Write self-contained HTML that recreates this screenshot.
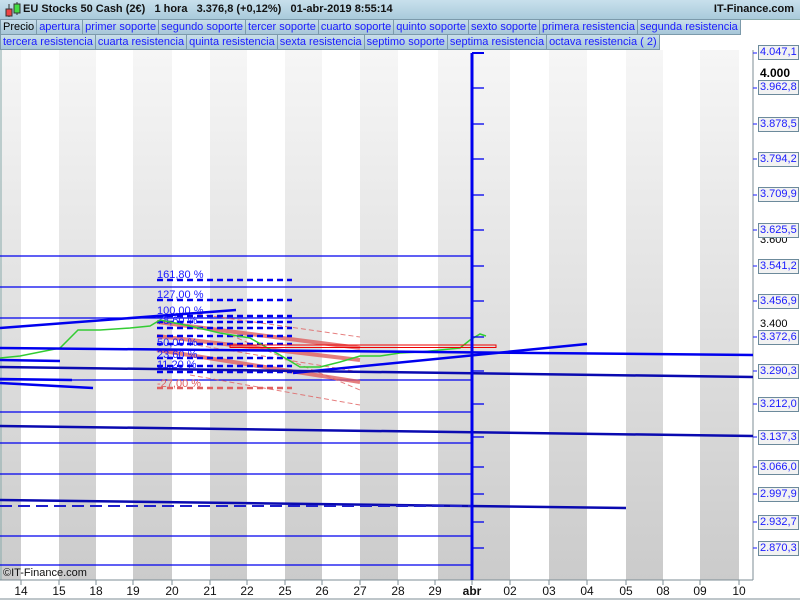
<!DOCTYPE html>
<html><head><meta charset="utf-8"><style>
body{margin:0;width:800px;height:600px;overflow:hidden;background:#fff;font-family:"Liberation Sans",sans-serif;position:relative}
#hdr{position:absolute;left:0;top:0;width:800px;height:19px;background:linear-gradient(#c8e0ec,#a9cadb);border-bottom:1px solid #8aa}
#hdr .t{position:absolute;left:23px;top:3px;font-size:11px;font-weight:bold;color:#111;white-space:pre}
#hdr .r{position:absolute;right:6px;top:3px;font-size:11px;font-weight:bold;color:#111}
.row{position:absolute;left:0;height:15px;display:flex}
.row span{display:block;height:14px;line-height:14px;font-size:11px;color:#1a1aff;background:linear-gradient(#c9dfeb,#a6c6d8);border:1px solid #7c9aab;border-left:none;padding:0 2px;white-space:nowrap}
.row span:first-child{border-left:1px solid #7c9aab}
.lab{position:absolute;left:758px;font-size:11px;color:#1a1aff;border:1px solid #6c8a9b;background:#f2f2f2;padding:0 1px;height:13px;line-height:13px}
.blk{position:absolute;left:760px;font-size:11px;color:#000}
.d{position:absolute;top:584px;font-size:12px;color:#111;transform:translateX(-50%)}
</style></head><body>
<svg width="800" height="600" style="position:absolute;left:0;top:0">
<defs><linearGradient id="g" x1="0" y1="0" x2="0" y2="1"><stop offset="0" stop-color="#f6f6f6"/><stop offset="1" stop-color="#cbcbcb"/></linearGradient></defs>
<g fill="url(#g)">
<rect x="0" y="50" width="21" height="530"/><rect x="59" y="50" width="37" height="530"/><rect x="133" y="50" width="39" height="530"/><rect x="210" y="50" width="37" height="530"/><rect x="285" y="50" width="37" height="530"/><rect x="360" y="50" width="38" height="530"/><rect x="438" y="50" width="72" height="530"/><rect x="549" y="50" width="38" height="530"/><rect x="626" y="50" width="37" height="530"/><rect x="700" y="50" width="39" height="530"/>
</g>
<line x1="1" y1="50" x2="1" y2="580" stroke="#8aa" />
<line x1="753" y1="50" x2="753" y2="580" stroke="#7d8d96"/>
<line x1="0" y1="580" x2="753" y2="580" stroke="#7d8d96"/>
<line x1="0" y1="599" x2="800" y2="599" stroke="#7d8d96"/>
<g stroke="#0000ee" stroke-width="1.2">
<line x1="0" y1="256" x2="472" y2="256"/><line x1="0" y1="287" x2="472" y2="287"/><line x1="0" y1="318" x2="472" y2="318"/><line x1="0" y1="380" x2="472" y2="380"/><line x1="0" y1="412" x2="472" y2="412"/><line x1="0" y1="443" x2="472" y2="443"/><line x1="0" y1="474" x2="472" y2="474"/><line x1="0" y1="536" x2="472" y2="536"/><line x1="0" y1="565" x2="472" y2="565"/>
</g>
<g stroke="#e06060" stroke-width="4" opacity=".8">
<line x1="157" y1="322" x2="360" y2="348"/><line x1="157" y1="336" x2="360" y2="360"/><line x1="157" y1="350" x2="360" y2="382"/>
</g>
<g stroke="#e06060" stroke-width="1" stroke-dasharray="5,3" opacity=".8">
<line x1="190" y1="313" x2="360" y2="337"/><line x1="190" y1="344" x2="360" y2="372"/><line x1="190" y1="375" x2="360" y2="405"/><line x1="230" y1="335" x2="360" y2="390"/>
</g>
<g stroke="#0000ee" stroke-width="2.5" stroke-dasharray="6,4">
<line x1="157" y1="280" x2="292" y2="280"/><line x1="157" y1="300" x2="292" y2="300"/><line x1="157" y1="316" x2="292" y2="316"/><line x1="157" y1="322" x2="292" y2="322"/><line x1="157" y1="328" x2="292" y2="328"/><line x1="157" y1="336" x2="292" y2="336"/><line x1="157" y1="344" x2="292" y2="344"/><line x1="157" y1="358" x2="292" y2="358"/><line x1="157" y1="366" x2="292" y2="366"/><line x1="157" y1="372" x2="292" y2="372"/>
</g>
<line x1="157" y1="388" x2="292" y2="388" stroke="#e06060" stroke-width="2.5" stroke-dasharray="6,4"/>
<g font-size="11" fill="#1a1aff" font-family="Liberation Sans">
<text x="157" y="278">161,80 %</text><text x="157" y="298">127,00 %</text><text x="157" y="314">100,00 %</text><text x="157" y="324">78,60 %</text><text x="157" y="346">50,00 %</text><text x="157" y="358">23,60 %</text><text x="157" y="368">11,20 %</text>
</g>
<text x="157" y="387" font-size="11" fill="#e06060">-27,00 %</text>
<polyline fill="none" stroke="#3c3" stroke-width="1.5" points="0,358 20,356 40,352 60,348 78,330 100,330 130,328 150,326 160,320 190,326 220,333 250,338 280,355 300,367 320,367 340,362 360,356 380,356 400,353 420,352 440,350 460,348 470,340 480,334 486,336"/>
<g stroke="#0000ee" stroke-width="2.5">
<line x1="0" y1="328" x2="236" y2="310"/><line x1="0" y1="348" x2="753" y2="355"/><line x1="0" y1="360" x2="60" y2="361"/><line x1="0" y1="379" x2="72" y2="380"/><line x1="0" y1="383" x2="93" y2="388"/><line x1="293" y1="373" x2="587" y2="344"/>
</g>
<g stroke="#0a0ab0" stroke-width="2.5">
<line x1="0" y1="367" x2="753" y2="377"/><line x1="0" y1="426" x2="753" y2="436"/><line x1="0" y1="500" x2="626" y2="508"/>
</g>
<line x1="0" y1="506" x2="472" y2="506" stroke="#2020cc" stroke-width="2" stroke-dasharray="12,6"/>
<rect x="230" y="345" width="266" height="2.5" fill="none" stroke="#e00" stroke-width="1"/>
<line x1="472" y1="53" x2="472" y2="580" stroke="#0000ee" stroke-width="3"/>
<line x1="472" y1="53" x2="484" y2="53" stroke="#0000ee" stroke-width="2"/>
<g stroke="#0000ee" stroke-width="1.3">
<line x1="472" y1="88" x2="484" y2="88"/><line x1="472" y1="124" x2="484" y2="124"/><line x1="472" y1="159" x2="484" y2="159"/><line x1="472" y1="195" x2="484" y2="195"/><line x1="472" y1="230" x2="484" y2="230"/><line x1="472" y1="266" x2="484" y2="266"/><line x1="472" y1="301" x2="484" y2="301"/><line x1="472" y1="337" x2="484" y2="337"/><line x1="472" y1="371" x2="484" y2="371"/><line x1="472" y1="404" x2="484" y2="404"/><line x1="472" y1="437" x2="484" y2="437"/><line x1="472" y1="467" x2="484" y2="467"/><line x1="472" y1="494" x2="484" y2="494"/><line x1="472" y1="522" x2="484" y2="522"/><line x1="472" y1="548" x2="484" y2="548"/>
</g>
<g stroke="#7d8d96"><line x1="21" y1="580" x2="21" y2="585"/><line x1="59" y1="580" x2="59" y2="585"/><line x1="96" y1="580" x2="96" y2="585"/><line x1="133" y1="580" x2="133" y2="585"/><line x1="172" y1="580" x2="172" y2="585"/><line x1="210" y1="580" x2="210" y2="585"/><line x1="247" y1="580" x2="247" y2="585"/><line x1="285" y1="580" x2="285" y2="585"/><line x1="322" y1="580" x2="322" y2="585"/><line x1="360" y1="580" x2="360" y2="585"/><line x1="398" y1="580" x2="398" y2="585"/><line x1="435" y1="580" x2="435" y2="585"/><line x1="472" y1="580" x2="472" y2="585"/><line x1="510" y1="580" x2="510" y2="585"/><line x1="549" y1="580" x2="549" y2="585"/><line x1="587" y1="580" x2="587" y2="585"/><line x1="626" y1="580" x2="626" y2="585"/><line x1="663" y1="580" x2="663" y2="585"/><line x1="700" y1="580" x2="700" y2="585"/><line x1="739" y1="580" x2="739" y2="585"/></g>
<g stroke="#1a1aff"><line x1="753" y1="53" x2="757" y2="53"/><line x1="753" y1="88" x2="757" y2="88"/><line x1="753" y1="124" x2="757" y2="124"/><line x1="753" y1="159" x2="757" y2="159"/><line x1="753" y1="195" x2="757" y2="195"/><line x1="753" y1="230" x2="757" y2="230"/><line x1="753" y1="266" x2="757" y2="266"/><line x1="753" y1="301" x2="757" y2="301"/><line x1="753" y1="337" x2="757" y2="337"/><line x1="753" y1="371" x2="757" y2="371"/><line x1="753" y1="404" x2="757" y2="404"/><line x1="753" y1="437" x2="757" y2="437"/><line x1="753" y1="467" x2="757" y2="467"/><line x1="753" y1="494" x2="757" y2="494"/><line x1="753" y1="522" x2="757" y2="522"/><line x1="753" y1="548" x2="757" y2="548"/></g>
</svg>
<div id="hdr"><svg width="20" height="18" style="position:absolute;left:3px;top:1px"><line x1="6" y1="3" x2="6" y2="16" stroke="#333"/><rect x="3" y="8" width="6" height="7" fill="#e44" stroke="#333"/><line x1="14" y1="1" x2="14" y2="14" stroke="#333"/><rect x="11" y="3" width="6" height="9" fill="#4d4" stroke="#333"/></svg><span class="t">EU Stocks 50 Cash (2€)   1 hora   3.376,8 (+0,12%)   01-abr-2019 8:55:14</span><span class="r">IT-Finance.com</span></div>
<div class="row" style="top:19px"><span style="color:#000">Precio</span><span>apertura</span><span>primer soporte</span><span>segundo soporte</span><span>tercer soporte</span><span>cuarto soporte</span><span>quinto soporte</span><span>sexto soporte</span><span>primera resistencia</span><span>segunda resistencia</span></div>
<div class="row" style="top:34px"><span>tercera resistencia</span><span>cuarta resistencia</span><span>quinta resistencia</span><span>sexta resistencia</span><span>septimo soporte</span><span>septima resistencia</span><span>octava resistencia ( 2)</span></div>
<div class="lab" style="top:45px">4.047,1</div>
<div class="blk" style="top:66px;font-weight:bold;font-size:12px">4.000</div>
<div class="lab" style="top:80px">3.962,8</div>
<div class="lab" style="top:117px">3.878,5</div>
<div class="lab" style="top:152px">3.794,2</div>
<div class="lab" style="top:187px">3.709,9</div>
<div class="blk" style="top:234px">3.600</div>
<div class="lab" style="top:223px">3.625,5</div>
<div class="lab" style="top:259px">3.541,2</div>
<div class="lab" style="top:294px">3.456,9</div>
<div class="blk" style="top:318px">3.400</div>
<div class="lab" style="top:330px">3.372,6</div>
<div class="lab" style="top:364px">3.290,3</div>
<div class="lab" style="top:397px">3.212,0</div>
<div class="lab" style="top:430px">3.137,3</div>
<div class="lab" style="top:460px">3.066,0</div>
<div class="lab" style="top:487px">2.997,9</div>
<div class="lab" style="top:515px">2.932,7</div>
<div class="lab" style="top:541px">2.870,3</div>
<div style="position:absolute;left:3px;top:567px;font-size:11px;color:#111">©IT-Finance.com</div>
<div class="d" style="left:21px">14</div><div class="d" style="left:59px">15</div><div class="d" style="left:96px">18</div><div class="d" style="left:133px">19</div><div class="d" style="left:172px">20</div><div class="d" style="left:210px">21</div><div class="d" style="left:247px">22</div><div class="d" style="left:285px">25</div><div class="d" style="left:322px">26</div><div class="d" style="left:360px">27</div><div class="d" style="left:398px">28</div><div class="d" style="left:435px">29</div><div class="d" style="left:472px;font-weight:bold">abr</div><div class="d" style="left:510px">02</div><div class="d" style="left:549px">03</div><div class="d" style="left:587px">04</div><div class="d" style="left:626px">05</div><div class="d" style="left:663px">08</div><div class="d" style="left:700px">09</div><div class="d" style="left:739px">10</div>
</body></html>
